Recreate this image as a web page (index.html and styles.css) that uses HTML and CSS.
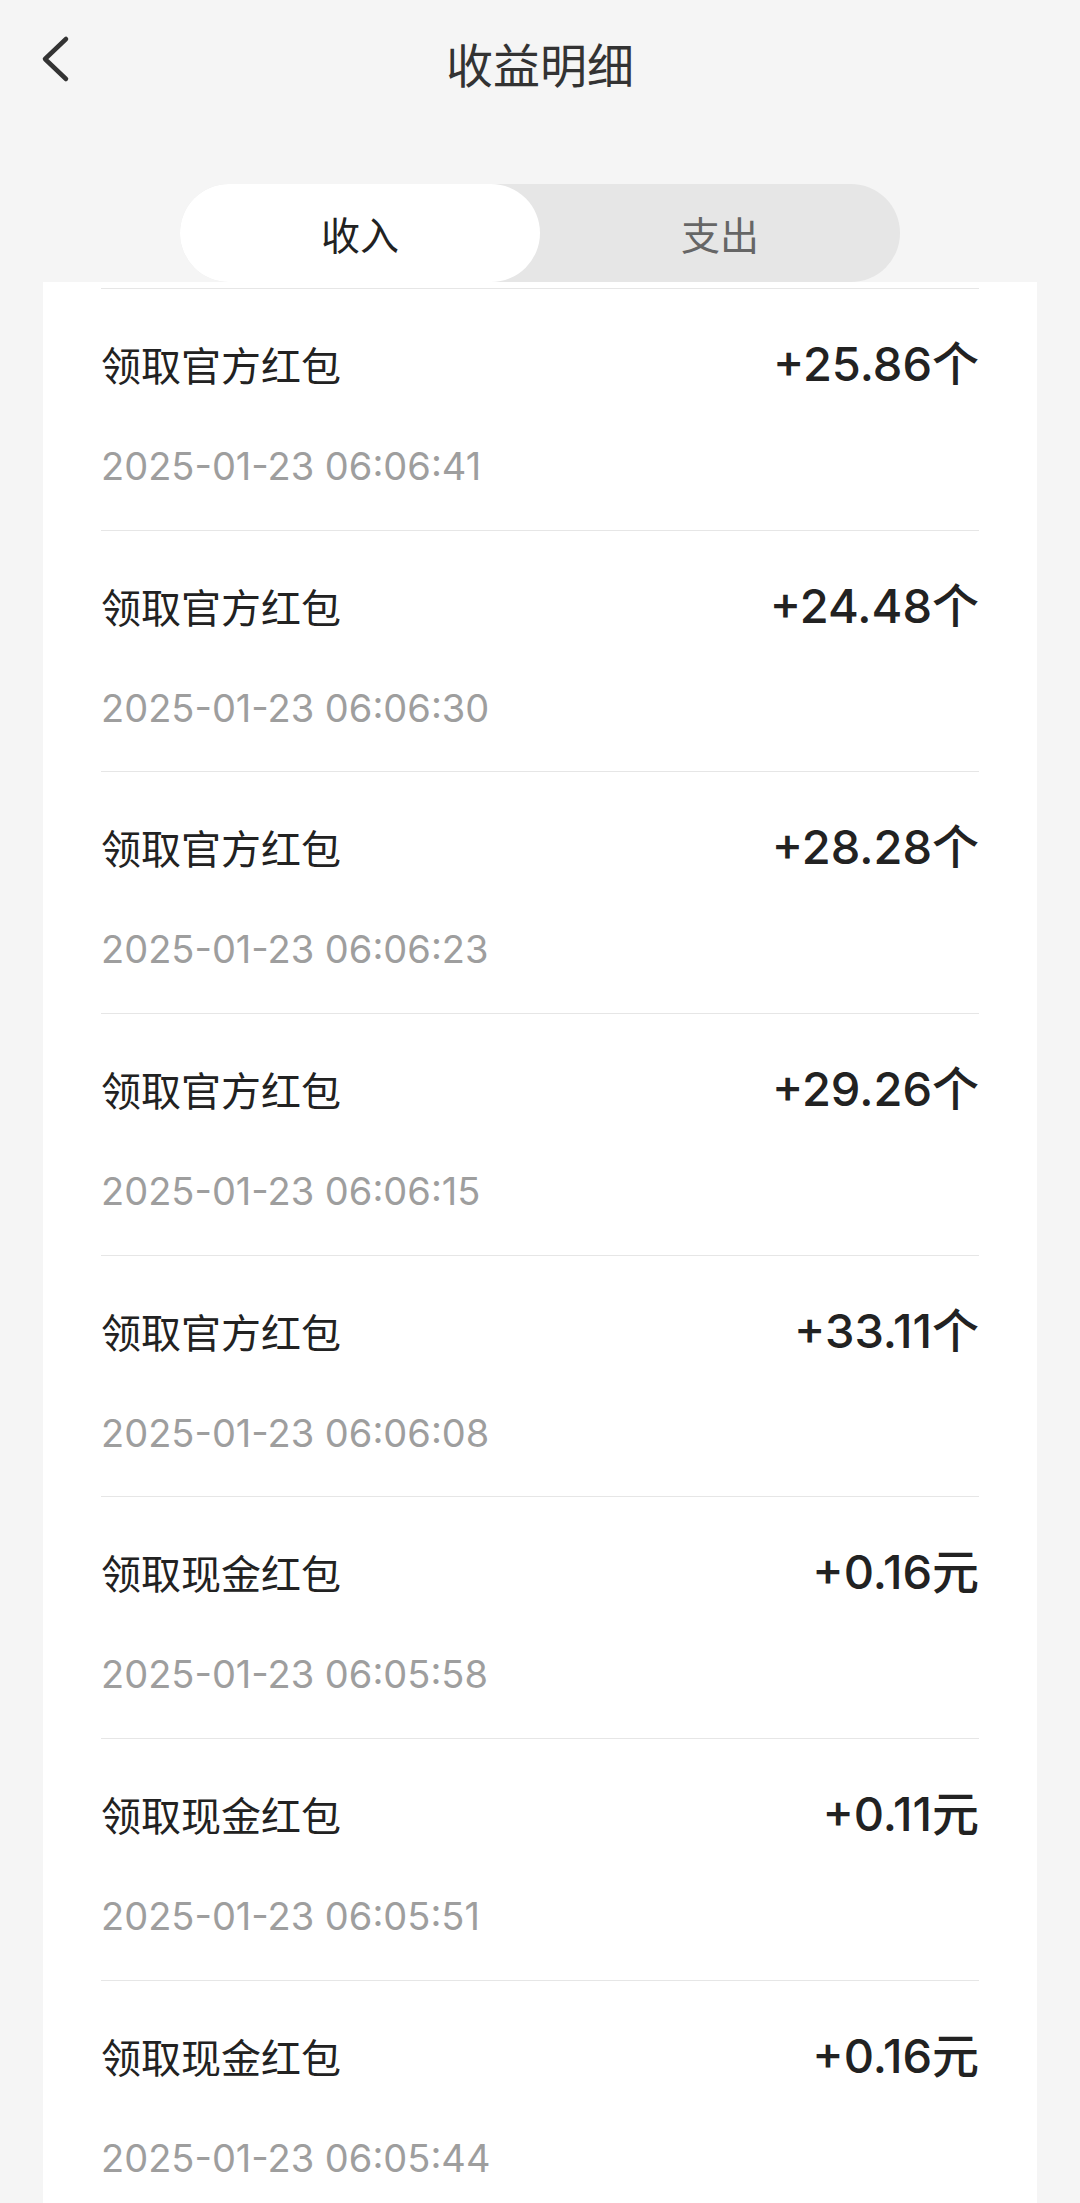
FILE: index.html
```html
<!DOCTYPE html>
<html lang="zh-CN">
<head>
<meta charset="utf-8">
<title>收益明细</title>
<link rel="stylesheet" href="styles.css">
</head>
<body>
<div class="page">
  <header class="header">
    <div class="back">
      <svg width="34" height="50" viewBox="0 0 34 50"><polyline points="26,4 5,24 26,44" fill="none" stroke="#333" stroke-width="4.5" stroke-linecap="round" stroke-linejoin="round"/></svg>
    </div>
    <h1 class="title">收益明细</h1>
    <div></div>
  </header>
  <div class="tabs">
    <div class="tab active">收入</div>
    <div class="tab">支出</div>
  </div>
  <div class="card">
    <div class="row"><div class="name">领取官方红包</div><div class="amount">+25.86个</div><div class="date">2025-01-23 06:06:41</div></div>
    <div class="row"><div class="name">领取官方红包</div><div class="amount">+24.48个</div><div class="date">2025-01-23 06:06:30</div></div>
    <div class="row"><div class="name">领取官方红包</div><div class="amount">+28.28个</div><div class="date">2025-01-23 06:06:23</div></div>
    <div class="row"><div class="name">领取官方红包</div><div class="amount">+29.26个</div><div class="date">2025-01-23 06:06:15</div></div>
    <div class="row"><div class="name">领取官方红包</div><div class="amount">+33.11个</div><div class="date">2025-01-23 06:06:08</div></div>
    <div class="row"><div class="name">领取现金红包</div><div class="amount">+0.16元</div><div class="date">2025-01-23 06:05:58</div></div>
    <div class="row"><div class="name">领取现金红包</div><div class="amount">+0.11元</div><div class="date">2025-01-23 06:05:51</div></div>
    <div class="row"><div class="name">领取现金红包</div><div class="amount">+0.16元</div><div class="date">2025-01-23 06:05:44</div></div>
  </div>
</div>
</body>
</html>
```
FILE: styles.css
```css
html, body {
  margin: 0;
  padding: 0;
  background: #f5f5f5;
}
body {
  font-family: Inter, "Noto Sans CJK SC", sans-serif;
  height: 2203px;
  overflow: hidden;
}
.page {
  width: 1080px;
}
.header {
  height: 126px;
  display: grid;
  grid-template-columns: 1fr auto 1fr;
  align-items: center;
}
.back {
  padding-left: 40px;
  display: flex;
  align-items: center;
  height: 50px;
  margin-top: -6px;
}
.title {
  margin: 0;
  font-family: "Noto Sans CJK SC", sans-serif;
  font-weight: 400;
  font-size: 47px;
  line-height: 56px;
  color: #333;
}
.tabs {
  margin: 58px auto 0;
  width: 720px;
  height: 98px;
  border-radius: 49px;
  background: #e6e6e6;
  display: flex;
}
.tab {
  flex: 1;
  display: flex;
  align-items: center;
  justify-content: center;
  font-family: "Noto Sans CJK SC", sans-serif;
  font-size: 39px;
  color: #666;
  border-radius: 49px;
}
.tab.active {
  background: #fff;
  color: #222;
}
.card {
  margin: 0 43px;
  background: #fff;
  padding: 6px 58px 0;
}
.row {
  border-top: 1px solid #e6e6e6;
  display: grid;
  grid-template-columns: 1fr auto;
  grid-template-rows: 48px 48px;
  row-gap: 54px;
  padding: 51px 0 39.7px;
  align-items: center;
}
.name {
  font-family: "Noto Sans CJK SC", sans-serif;
  font-size: 40px;
  line-height: 48px;
  color: #222;
}
.amount {
  font-family: Inter, "Noto Sans CJK SC", sans-serif;
  font-size: 47px;
  font-weight: 500;
  line-height: 48px;
  color: #222;
  text-align: right;
}
.date {
  grid-column: 1 / 3;
  font-family: Inter, sans-serif;
  font-size: 38px;
  line-height: 48px;
  color: #9e9e9e;
}
```
